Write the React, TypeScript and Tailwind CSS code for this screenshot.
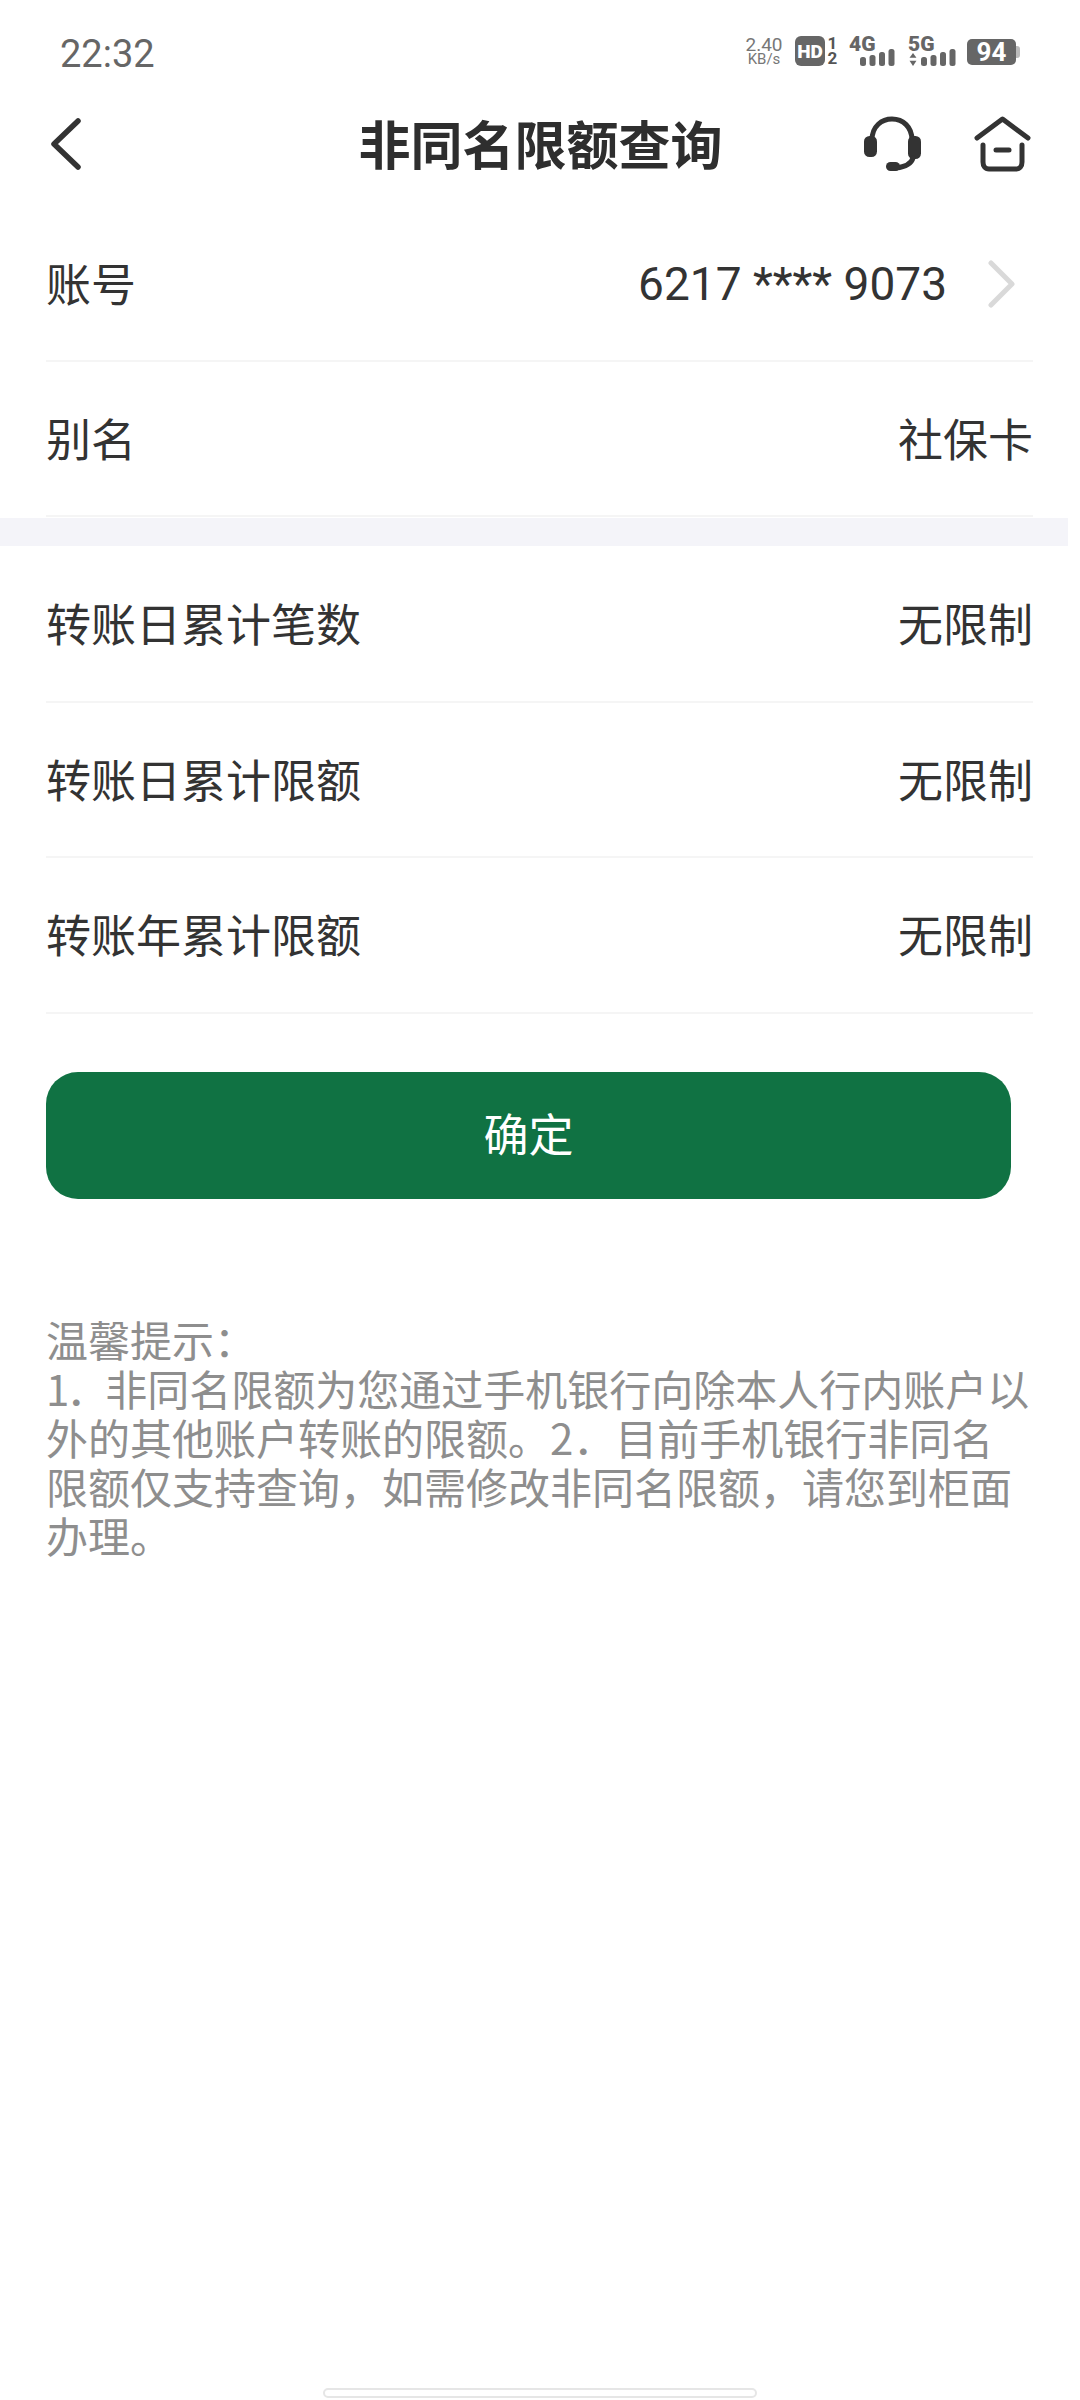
const cjk = "font-['Noto_Sans_CJK_SC','Noto_Sans',sans-serif]";

const SignalBars = () => (
  <svg width="35" height="17" viewBox="0 0 35 17" fill="#666">
    <rect x="0" y="8" width="6" height="9" rx="2.5" />
    <rect x="9.5" y="6" width="6" height="11" rx="2.5" />
    <rect x="19" y="3" width="6" height="14" rx="2.5" />
    <rect x="28.5" y="0" width="6" height="17" rx="2.5" />
  </svg>
);

const StatusBar = () => (
  <div className="h-[80px] flex items-start justify-between pl-[60px] pr-[60px] pt-[32px] text-[#666] font-['Roboto',sans-serif]">
    <span className="text-[38px] leading-[44px] text-[#666]">22:32</span>
    <div className="flex items-start pt-[4px]">
      {/* 网速 */}
      <div className="w-[38px] flex flex-col items-center text-[#777] leading-none">
        <span className="text-[19px] leading-[17px]">2.40</span>
        <span className="text-[15px] leading-[13px]">KB/s</span>
      </div>
      {/* HD */}
      <div className="ml-[12px] w-[30px] h-[30px] rounded-[6px] bg-[#666] flex items-center justify-center text-white text-[19px] font-black leading-none">
        HD
      </div>
      <div className="ml-[2px] w-[11px] flex flex-col items-center text-[#555] text-[17px] font-bold leading-[15px]">
        <span>1</span>
        <span>2</span>
      </div>
      {/* 4G */}
      <div className="ml-[11px] relative w-[46px] h-[30px]">
        <span className="absolute left-0 top-0 text-[#666] text-[21px] font-black leading-[17px]">4G</span>
        <div className="absolute right-0 bottom-0 flex">
          <SignalBars />
        </div>
      </div>
      {/* 5G */}
      <div className="ml-[13px] relative w-[48px] h-[30px]">
        <span className="absolute left-0 top-0 text-[#666] text-[21px] font-black leading-[17px]">5G</span>
        <svg className="absolute left-0 bottom-0" width="10" height="13" viewBox="0 0 10 15" fill="#666">
          <path d="M5 0 L9 5.5 H1 Z" />
          <path d="M5 15 L9 9 H1 Z" />
        </svg>
        <div className="absolute right-0 bottom-0 flex">
          <SignalBars />
        </div>
      </div>
      {/* 电池 */}
      <div className="ml-[11px] mt-[3px] flex items-center">
        <div className="w-[49px] h-[26px] rounded-[5px] bg-[#666] flex items-center justify-center text-white text-[26px] font-bold leading-none">
          94
        </div>
        <div className="w-[4px] h-[12px] rounded-r-[3px] bg-[#bbb]" />
      </div>
    </div>
  </div>
);

const Header = () => (
  <div className="h-[127px] grid grid-cols-[1fr_auto_1fr] items-center pl-[50px] pr-[49px]">
    <svg width="32" height="52" viewBox="0 0 32 52" fill="none" stroke="#333" strokeWidth="5.5" strokeLinecap="round" strokeLinejoin="round">
      <path d="M28 3 L4 26 L28 49" />
    </svg>
    <h1 className={`${cjk} -mt-[2px] text-[52px] leading-none font-bold text-[#2e2e2e]`}>非同名限额查询</h1>
    <div className="flex items-center justify-end gap-[53px]">
      {/* 客服 */}
      <svg width="57" height="56" viewBox="0 0 57 56" fill="none">
        <path d="M8 24 C8 10 18 3 28 3 C39 3 48 11 48 24" stroke="#333" strokeWidth="5" strokeLinecap="round" />
        <rect x="0" y="20" width="13" height="21" rx="5.5" fill="#333" />
        <rect x="44" y="20" width="13" height="23" rx="5.5" fill="#333" />
        <path d="M49 42 C47 49 40 51 32 52" stroke="#333" strokeWidth="5" strokeLinecap="round" />
        <rect x="22" y="46" width="14" height="9" rx="4.5" fill="#333" />
      </svg>
      {/* 首页 */}
      <svg width="57" height="56" viewBox="0 0 57 56" fill="none" stroke="#333" strokeWidth="5" strokeLinecap="round" strokeLinejoin="round">
        <path d="M3 22 L28.5 3 L54 22" />
        <path d="M9 29 V46 C9 50 11 53 15 53 H42 C46 53 48 50 48 46 V29" />
        <path d="M22 34 H35" />
      </svg>
    </div>
  </div>
);

interface RowProps {
  label: string;
  value: string;
  arrow?: boolean;
  tall?: boolean;
}

const Row = ({ label, value, arrow, tall }: RowProps) => (
  <div className={`${cjk} ${tall ? "h-[155.5px]" : "h-[155px]"} flex items-center justify-between border-b-[2px] border-[#f5f5f5] text-[45px] text-[#333] leading-none`}>
    <span className="-mt-[2px]">{label}</span>
    {arrow ? (
      <div className="flex items-center">
        <span className="font-['Roboto',sans-serif] text-[46px]">{value}</span>
        <svg className="ml-[41px] mr-[18px]" width="27" height="48" viewBox="0 0 27 48" fill="none" stroke="#d9d9d9" strokeWidth="5" strokeLinecap="round" strokeLinejoin="round">
          <path d="M3 3 L24 24 L3 45" />
        </svg>
      </div>
    ) : (
      <span className="-mt-[2px]">{value}</span>
    )}
  </div>
);

export default function App() {
  return (
    <div className="w-[1080px] h-[2400px] bg-white flex flex-col overflow-hidden">
      <StatusBar />
      <Header />

      <div className="pl-[46px] pr-[47px]">
        <Row label="账号" value="6217 **** 9073" arrow />
        <Row label="别名" value="社保卡" />
      </div>

      <div className="w-[1068px] h-[28px] bg-[#f4f4f9] mt-[1px] shrink-0" />

      <div className="pl-[46px] pr-[47px] mt-[1px]">
        <Row tall label="转账日累计笔数" value="无限制" />
        <Row tall label="转账日累计限额" value="无限制" />
        <Row tall label="转账年累计限额" value="无限制" />
      </div>

      <button className={`${cjk} ml-[46px] mt-[58px] w-[965px] h-[127px] pb-[6px] shrink-0 rounded-[32px] bg-[#107243] text-white text-[45px] leading-none`}>
        确定
      </button>

      <div className={`${cjk} ml-[46px] mt-[115px] w-[987px] text-[42px] leading-[49px] text-[#8e8e8e]`}>
        <p>温馨提示：</p>
        <p>
          <span className="tracking-[-3px]">1．</span>
          非同名限额为您通过手机银行向除本人行内账户以外的其他账户转账的限额。2．目前手机银行非同名限额仅支持查询，如需修改非同名限额，请您到柜面办理。
        </p>
      </div>

      {/* 手势条 */}
      <div className="mt-auto mb-[2px] mx-auto w-[434px] h-[10px] rounded-full border-[2px] border-[#e6e6e6] shrink-0" />
    </div>
  );
}
